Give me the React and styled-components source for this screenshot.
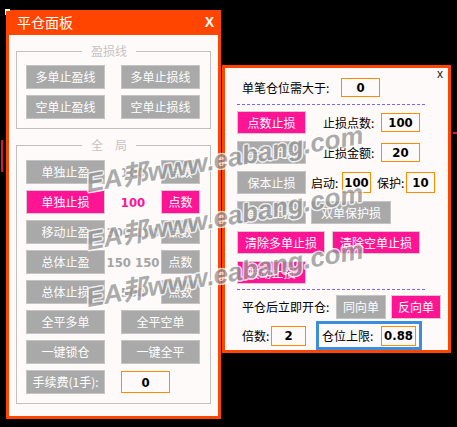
import React from "react";
import styled, { createGlobalStyle } from "styled-components";

const Global = createGlobalStyle`
  html, body { margin: 0; padding: 0; background: #000; }
  body { width: 457px; height: 427px; overflow: hidden; }
`;

const ORANGE = "#FF4500";
const PINK = "#FF1493";
const GRAY = "#A9A9A9";
const PAPER = "#FFFAFA";
const CJK = `"Noto Sans CJK SC", "Noto Sans", sans-serif`;
const NUM = `"Liberation Sans Narrow", "DejaVu Sans Condensed", "Liberation Sans", sans-serif`;

const Desktop = styled.div`
  position: relative;
  width: 457px;
  height: 427px;
  overflow: hidden;
  background: #000;
  display: flex;
  align-items: flex-start;
  gap: 1px;
  padding: 10px 0 0 6px;
  box-sizing: border-box;
  font-family: ${CJK};
`;

const ChartMark = styled.div`
  position: absolute;
  left: ${(p) => p.$x}px;
  top: ${(p) => p.$y}px;
  width: ${(p) => p.$w}px;
  height: ${(p) => p.$h}px;
  background: #dc143c;
`;

const CornerMark = styled.div`
  position: absolute;
  left: 5px;
  top: 9px;
  width: 5px;
  height: 6px;
  border-top: 2px solid #fff;
  border-left: 1px solid #fff;
  box-sizing: border-box;
`;

const LeftPanel = styled.div`
  flex-shrink: 0;
  width: 215px;
  height: 409px;
  background: ${ORANGE};
  padding: 0 3px 3px;
  box-sizing: border-box;
  display: flex;
  flex-direction: column;
`;

const TitleBar = styled.div`
  height: 25px;
  display: flex;
  align-items: center;
  justify-content: space-between;
  padding: 0 4px 1px 8px;
  box-sizing: border-box;
  color: #fff;
`;

const Title = styled.span`
  font-family: ${CJK};
  font-size: 14px;
  line-height: 16px;
`;

const CloseBold = styled.span`
  font-family: "Liberation Sans", Arial, sans-serif;
  font-weight: bold;
  font-size: 14px;
  line-height: 14px;
`;

const LeftBody = styled.div`
  flex: 1;
  background: ${PAPER};
  padding: 16px 7px 0;
  display: flex;
  flex-direction: column;
  gap: 16px;
`;

const GroupBox = styled.div`
  position: relative;
  border: 1px solid #c0c0c0;
  padding: ${(p) => p.$pt}px 10px 9px 9px;
  display: grid;
  row-gap: 6px;
`;

const Legend = styled.span`
  position: absolute;
  left: 65px;
  top: -9px;
  padding: 0 9px;
  background: ${PAPER};
  color: #c4c4c4;
  font-size: 12px;
  line-height: 16px;
  white-space: pre;
`;

const PairRow = styled.div`
  display: grid;
  grid-template-columns: 79px 79px;
  column-gap: 16px;
  align-items: center;
`;

const ValueRow = styled.div`
  display: grid;
  grid-template-columns: 79px 56px 39px;
  align-items: center;
`;

const Btn = styled.button`
  width: ${(p) => p.$w || 79}px;
  height: ${(p) => p.$h || 24}px;
  background: ${(p) => (p.$pink ? PINK : GRAY)};
  color: #fff;
  border: 1px solid ${(p) => (p.$pink ? "#d9c8d0" : "#c4c4c4")};
  box-sizing: border-box;
  padding: 0;
  margin: 0;
  font-family: ${CJK};
  font-size: 12px;
  line-height: 14px;
  white-space: nowrap;
  display: flex;
  align-items: center;
  justify-content: center;
`;

const Value = styled.span`
  text-align: center;
  font-family: ${NUM};
  font-weight: bold;
  font-size: 13px;
  color: ${(p) => (p.$pink ? PINK : "#a4a4a4")};
  white-space: nowrap;
`;

const NumBox = styled.div`
  width: ${(p) => p.$w}px;
  height: ${(p) => p.$h || 19}px;
  margin-left: ${(p) => p.$ml || 0}px;
  border: 1px solid #ff8c00;
  box-sizing: border-box;
  background: ${PAPER};
  display: flex;
  align-items: center;
  justify-content: center;
  font-family: ${NUM};
  font-weight: bold;
  font-size: 13px;
  color: #000;
`;

const RightPanel = styled.div`
  position: relative;
  flex-shrink: 0;
  margin-top: 55px;
  width: 229px;
  height: 288px;
  border: 3px solid ${ORANGE};
  box-sizing: border-box;
  background: ${PAPER};
  padding: 10px 0 0 12px;
  display: flex;
  flex-direction: column;
`;

const SmallClose = styled.span`
  position: absolute;
  right: 5px;
  top: -1px;
  font-family: "Liberation Sans", Arial, sans-serif;
  font-size: 12px;
  line-height: 14px;
  color: #1a1a2a;
`;

const Row = styled.div`
  display: flex;
  align-items: center;
  gap: ${(p) => p.$gap || 0}px;
  margin-top: ${(p) => p.$mt || 0}px;
  padding-left: ${(p) => p.$pl || 0}px;
  height: ${(p) => p.$h}px;
`;

const Label = styled.span`
  flex-shrink: 0;
  width: ${(p) => p.$w}px;
  margin-left: ${(p) => p.$ml || 0}px;
  font-family: ${CJK};
  font-size: 12px;
  line-height: 14px;
  color: #000;
  white-space: nowrap;
`;

const Dashed = styled.div`
  width: 188px;
  height: 0;
  border-top: 1px dashed #7b68ee;
  margin-top: ${(p) => p.$mt}px;
`;

const LimitBox = styled.div`
  width: 106px;
  height: 29px;
  border: 3px solid #3a8edb;
  box-sizing: border-box;
  padding-left: 3px;
  display: flex;
  align-items: center;
`;

const WatermarkLayer = styled.div`
  position: absolute;
  inset: 0;
  pointer-events: none;
`;

const Watermark = styled.span`
  position: absolute;
  left: 88px;
  top: ${(p) => p.$y}px;
  font-family: "Liberation Sans", "Noto Sans CJK SC", sans-serif;
  font-style: italic;
  font-weight: bold;
  font-size: 26px;
  line-height: 26px;
  color: rgb(150, 150, 150);
  opacity: 0.78;
  white-space: nowrap;
  transform: rotate(-10deg);
  transform-origin: 0 22px;
  text-shadow: 1.5px 0 0 #fff, -1.5px 0 0 #fff, 0 1.5px 0 #fff, 0 -1.5px 0 #fff,
    1px 1px 0 #fff, -1px -1px 0 #fff, 1px -1px 0 #fff, -1px 1px 0 #fff,
    0 0 2px rgba(0, 0, 0, 0.2);
`;

const globalRows = [
  { name: "单独止盈", value: "100" },
  { name: "单独止损", value: "100", pink: true },
  { name: "移动止盈", value: "300 100" },
  { name: "总体止盈", value: "150 150" },
  { name: "总体止损", value: "500" },
];

export default function App() {
  return (
    <>
      <Global />
      <Desktop>
        <ChartMark $x={1} $y={140} $w={2} $h={32} />
        <ChartMark $x={453} $y={132} $w={4} $h={2} />
        <CornerMark />

        <LeftPanel>
          <TitleBar>
            <Title>平仓面板</Title>
            <CloseBold>X</CloseBold>
          </TitleBar>
          <LeftBody>
            <GroupBox $pt={13}>
              <Legend>盈损线</Legend>
              <PairRow>
                <Btn>多单止盈线</Btn>
                <Btn>多单止损线</Btn>
              </PairRow>
              <PairRow>
                <Btn>空单止盈线</Btn>
                <Btn>空单止损线</Btn>
              </PairRow>
            </GroupBox>

            <GroupBox $pt={14}>
              <Legend>全　局</Legend>
              {globalRows.map((r) => (
                <ValueRow key={r.name}>
                  <Btn $pink={r.pink}>{r.name}</Btn>
                  <Value $pink={r.pink}>{r.value}</Value>
                  <Btn $w={39} $pink={r.pink}>点数</Btn>
                </ValueRow>
              ))}
              <PairRow>
                <Btn>全平多单</Btn>
                <Btn>全平空单</Btn>
              </PairRow>
              <PairRow>
                <Btn>一键锁仓</Btn>
                <Btn>一键全平</Btn>
              </PairRow>
              <PairRow>
                <Btn>手续费(1手):</Btn>
                <NumBox $w={49} $h={22}>0</NumBox>
              </PairRow>
            </GroupBox>
          </LeftBody>
        </LeftPanel>

        <RightPanel>
          <SmallClose>x</SmallClose>
          <Row $h={19} $pl={5}>
            <Label $w={99}>单笔仓位需大于:</Label>
            <NumBox $w={39}>0</NumBox>
          </Row>
          <Dashed $mt={7} />
          <Row $h={23} $mt={6}>
            <Btn $w={69} $h={23} $pink>点数止损</Btn>
            <Label $w={58} $ml={17}>止损点数:</Label>
            <NumBox $w={39}>100</NumBox>
          </Row>
          <Row $h={23} $mt={7}>
            <Btn $w={69} $h={23}>金额止损</Btn>
            <Label $w={58} $ml={17}>止损金额:</Label>
            <NumBox $w={39}>20</NumBox>
          </Row>
          <Row $h={23} $mt={7} $gap={5}>
            <Btn $w={69} $h={23}>保本止损</Btn>
            <Label $w={26}>启动:</Label>
            <NumBox $w={29} $h={21}>100</NumBox>
            <Label $w={24} $ml={1}>保护:</Label>
            <NumBox $w={29} $h={21}>10</NumBox>
          </Row>
          <Row $h={23} $mt={7} $gap={5}>
            <Btn $w={69} $h={23}>首单止损</Btn>
            <Btn $w={80} $h={23}>双单保护损</Btn>
          </Row>
          <Row $h={23} $mt={7} $gap={7}>
            <Btn $w={88} $h={23} $pink>清除多单止损</Btn>
            <Btn $w={88} $h={23} $pink>清除空单止损</Btn>
          </Row>
          <Row $h={23} $mt={7}>
            <Btn $w={69} $h={23} $pink>被动止损</Btn>
          </Row>
          <Dashed $mt={5} />
          <Row $h={24} $mt={5} $pl={5} $gap={5}>
            <Label $w={89}>平仓后立即开仓:</Label>
            <Btn $w={50}>同向单</Btn>
            <Btn $w={50} $pink>反向单</Btn>
          </Row>
          <Row $h={29} $mt={2} $pl={5} $gap={10}>
            <Label $w={19}>倍数:</Label>
            <NumBox $w={35} $h={20}>2</NumBox>
            <LimitBox>
              <Label $w={59}>仓位上限:</Label>
              <NumBox $w={35} $h={20}>0.88</NumBox>
            </LimitBox>
          </Row>
        </RightPanel>

        <WatermarkLayer>
          <Watermark $y={170}>EA邦www.eabang.com</Watermark>
          <Watermark $y={228}>EA邦www.eabang.com</Watermark>
          <Watermark $y={285}>EA邦www.eabang.com</Watermark>
        </WatermarkLayer>
      </Desktop>
    </>
  );
}
